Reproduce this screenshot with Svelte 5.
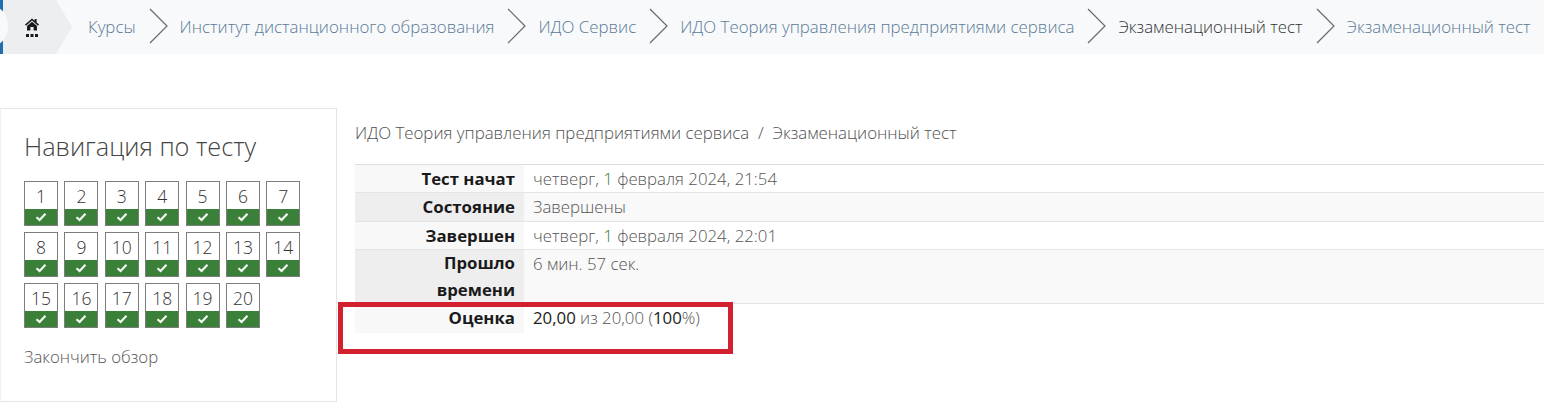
<script>
  const crumbs = [
    { label: 'Курсы', link: true },
    { label: 'Институт дистанционного образования', link: true },
    { label: 'ИДО Сервис', link: true },
    { label: 'ИДО Теория управления предприятиями сервиса', link: true },
    { label: 'Экзаменационный тест', link: false },
    { label: 'Экзаменационный тест', link: true }
  ];

  const questions = Array.from({ length: 20 }, (_, i) => i + 1);
</script>

<div class="page">
  <nav class="crumbs">
    <div class="home">
      <span class="edge"></span>
      <span class="bulge"></span>
      <svg class="home-icon" width="16" height="20" viewBox="0 0 16 20" aria-hidden="true">
        <path d="M8 1.5 L1 7.6 L2 8.8 L8 3.6 L14 8.8 L15 7.6 L12.6 5.5 V2 H10.6 V3.8 Z" fill="#1a1a1a" />
        <path d="M3 9 L8 4.8 L13 9 V13.5 H9.6 V10 H6.4 V13.5 H3 Z" fill="#1a1a1a" />
        <rect x="2" y="17" width="3" height="3" fill="#1a1a1a" />
        <rect x="6.5" y="17" width="3" height="3" fill="#1a1a1a" />
        <rect x="11" y="17" width="3" height="3" fill="#1a1a1a" />
      </svg>
    </div>
    {#each crumbs as crumb, i}
      {#if i > 0}
        <svg class="sep" width="20" height="36" viewBox="0 0 20 36" aria-hidden="true">
          <path d="M1 1 L18 18 L1 35" fill="none" stroke="#6a6a6a" stroke-width="1.2" />
        </svg>
      {/if}
      <span class="crumb" class:link={crumb.link}>{crumb.label}</span>
    {/each}
  </nav>

  <div class="content">
    <aside class="panel">
      <h2>Навигация по тесту</h2>
      <div class="grid">
        {#each questions as q}
          <div class="q">
            <span class="num">{q}</span>
            <span class="state">
              <svg width="12" height="10" viewBox="0 0 12 10" aria-hidden="true">
                <path d="M1.5 5.2 L4.6 8 L10.5 1.8" fill="none" stroke="#f4f8f4" stroke-width="2.2" />
              </svg>
            </span>
          </div>
        {/each}
      </div>
      <div class="finish">Закончить обзор</div>
    </aside>

    <main class="main">
      <div class="path">ИДО Теория управления предприятиями сервиса&nbsp; /&nbsp; Экзаменационный тест</div>
      <table>
        <tbody>
          <tr>
            <th>Тест начат</th>
            <td>четверг, <span class="one">1</span> февраля 2024, 21:54</td>
          </tr>
          <tr class="alt state-row">
            <th>Состояние</th>
            <td>Завершены</td>
          </tr>
          <tr>
            <th>Завершен</th>
            <td>четверг, <span class="one">1</span> февраля 2024, 22:01</td>
          </tr>
          <tr class="alt wrap">
            <th>Прошло времени</th>
            <td>6 мин. 57 сек.</td>
          </tr>
          <tr class="last">
            <th>Оценка</th>
            <td><b>20,00</b> из 20,00 (<b>100</b>%)</td>
          </tr>
        </tbody>
      </table>
      <div class="mark"></div>
    </main>
  </div>
</div>

<style>
  :global(body) {
    margin: 0;
    background: #fff;
    overflow: hidden;
  }

  .page {
    width: 1544px;
    height: 413px;
    font-family: "Open Sans", "Liberation Sans", sans-serif;
    font-weight: 300;
    color: #4a4a4a;
    overflow: hidden;
  }

  .crumbs {
    display: flex;
    align-items: center;
    height: 54px;
    background: #f7f9fb;
    font-size: 16.85px;
    white-space: nowrap;
  }

  .home {
    position: relative;
    flex: none;
    width: 72px;
    height: 54px;
    margin-right: 16px;
    background: #edeeef;
    clip-path: polygon(0 0, 56px 0, 72px 27px, 56px 54px, 0 54px);
  }

  .edge {
    position: absolute;
    left: 0;
    top: 0;
    width: 3px;
    height: 54px;
    background: #1f6fb0;
  }

  .bulge {
    position: absolute;
    left: -20px;
    top: 7px;
    width: 28px;
    height: 38px;
    border-radius: 50%;
    background: #f7fafc;
  }

  .home-icon {
    position: absolute;
    left: 24px;
    top: 17px;
  }

  .sep {
    flex: none;
    margin: 0 11px 2px 13px;
  }

  .crumb {
    margin-bottom: 2px;
    color: #333;
  }

  .crumb.link {
    color: #5b7a96;
  }

  .content {
    display: flex;
    align-items: flex-start;
    margin-top: 54px;
  }

  .panel {
    flex: none;
    box-sizing: border-box;
    width: 337px;
    height: 294px;
    padding: 21px 0 0 23px;
    border: 1px solid #e5e5e5;
    border-left-color: #f0f0f0;
  }

  h2 {
    margin: 0 0 18px 0;
    font-size: 25.3px;
    font-weight: 300;
    line-height: 33px;
    color: #444;
  }

  .grid {
    display: grid;
    grid-template-columns: repeat(7, 34px);
    column-gap: 6.4px;
    row-gap: 6px;
  }

  .q {
    display: flex;
    flex-direction: column;
    box-sizing: border-box;
    height: 45px;
    border: 1px solid #7d7d7d;
    background: #fff;
  }

  .num {
    height: 27px;
    font-size: 17.5px;
    line-height: 28px;
    text-align: center;
    color: #333;
  }

  .state {
    display: flex;
    flex: 1;
    align-items: center;
    justify-content: center;
    background: #3b8039;
  }

  .finish {
    margin-top: 18px;
    font-size: 16.8px;
    line-height: 22px;
    color: #555;
  }

  .main {
    position: relative;
    flex: 1;
    margin-left: 18px;
  }

  .path {
    margin-top: 14px;
    height: 42px;
    font-size: 16.85px;
    line-height: 22px;
    color: #4f4f4f;
  }

  table {
    width: 100%;
    border-collapse: collapse;
    border-top: 1px solid #dedede;
    font-size: 16.8px;
    line-height: 27px;
  }

  th {
    box-sizing: border-box;
    width: 169px;
    padding: 0 9px 0 20px;
    font-weight: 700;
    text-align: right;
    vertical-align: top;
    color: #1a1a1a;
    background: #f8f8f8;
    border-bottom: 1px solid #e4e4e4;
  }

  td {
    padding: 0 0 0 9px;
    vertical-align: top;
    color: #555;
    border-bottom: 1px solid #e4e4e4;
  }

  .alt th {
    background: #eeeeee;
  }

  .alt td {
    background: #f9f9f9;
  }

  .state-row th {
    height: 29px;
  }

  .wrap th {
    line-height: 26.5px;
  }

  .last th,
  .last td {
    height: 29px;
    border-bottom: none;
  }

  .one {
    color: #3b7a3b;
  }

  td b {
    font-weight: 400;
    color: #222;
  }

  .mark {
    position: absolute;
    left: -17px;
    top: 194px;
    box-sizing: border-box;
    width: 395px;
    height: 52px;
    border: 5px solid #d2202f;
  }
</style>
